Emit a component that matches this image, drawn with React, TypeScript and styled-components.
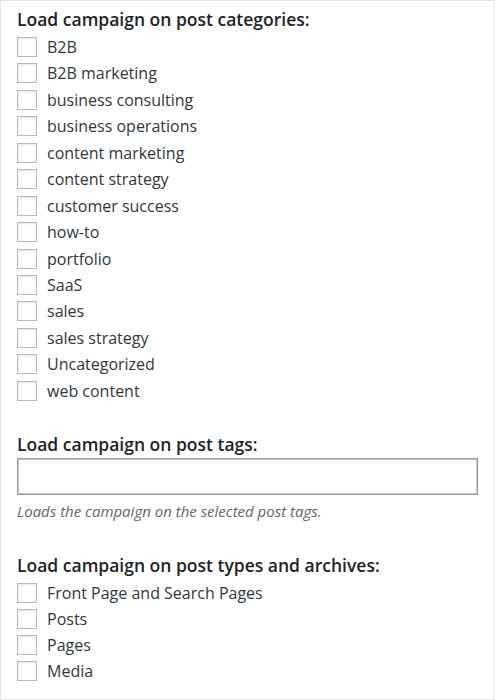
import React from 'react';
import styled, {createGlobalStyle} from "styled-components";

const GlobalStyle = createGlobalStyle`
  html, body {
    margin: 0;
    padding: 0;
    background: #fff;
  }
  body {
    font-family: "Open Sans", "Noto Sans", Arial, sans-serif;
  }
`

const Panel = styled.div`
  box-sizing: border-box;
  width: 495px;
  height: 700px;
  border: 1px solid #e5e5e5;
  padding: 6px 16px 0 16px;
  background: #fff;
`
const Section = styled.section<{$gap: number}>`
  margin-bottom: ${p => p.$gap}px;
`
const Heading = styled.h3`
  margin: 0;
  font-size: 17.5px;
  line-height: 24px;
  font-weight: 600;
  color: #1d2327;
`
const OptionList = styled.ul<{$gap: number}>`
  list-style: none;
  margin: 6px 0 0 0;
  padding: 0;
  display: flex;
  flex-direction: column;
  gap: ${p => p.$gap}px;
`
const Option = styled.li`
  display: flex;
  align-items: center;
  gap: 10px;
  height: 20px;
  font-size: 16px;
  color: #32373c;
`
const Box = styled.span`
  box-sizing: border-box;
  width: 20px;
  height: 20px;
  border: 1px solid #b4b9be;
  box-shadow: inset 0 1px 2px rgba(0, 0, 0, 0.1);
  background: #fff;
  flex-shrink: 0;
`
const TextInput = styled.div`
  box-sizing: border-box;
  width: 461px;
  height: 37px;
  margin-top: 2px;
  border: 1px solid #9a9a9a;
  box-shadow: inset 0 0 0 1px #c8c8c8;
  background: #fff;
`
const Description = styled.p`
  margin: 6px 0 0 0;
  font-size: 15px;
  line-height: 20px;
  font-style: italic;
  color: #666;
`

const categories: string[] = [
    'B2B', 'B2B marketing', 'business consulting', 'business operations', 'content marketing',
    'content strategy', 'customer success', 'how-to', 'portfolio', 'SaaS', 'sales',
    'sales strategy', 'Uncategorized', 'web content'
]
const postTypes: string[] = ['Front Page and Search Pages', 'Posts', 'Pages', 'Media']

const Checklist: React.FC<{items: string[], gap: number}> = ({items, gap}) => (
    <OptionList $gap={gap}>
        {items.map(item => (
            <Option key={item}>
                <Box/>
                <span>{item}</span>
            </Option>
        ))}
    </OptionList>
)

const App: React.FC = () => {
    return (
        <>
            <GlobalStyle/>
            <Panel>
                <Section $gap={31}>
                    <Heading>Load campaign on post categories:</Heading>
                    <Checklist items={categories} gap={6.45}/>
                </Section>
                <Section $gap={32}>
                    <Heading>Load campaign on post tags:</Heading>
                    <TextInput/>
                    <Description>Loads the campaign on the selected post tags.</Description>
                </Section>
                <Section $gap={0}>
                    <Heading>Load campaign on post types and archives:</Heading>
                    <Checklist items={postTypes} gap={6}/>
                </Section>
            </Panel>
        </>
    );
};
export default App;
